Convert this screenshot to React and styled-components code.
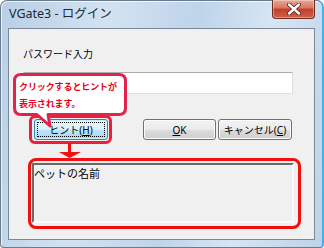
import React from 'react';
import styled, { createGlobalStyle } from 'styled-components';

const Global = createGlobalStyle`
  html, body { margin: 0; padding: 0; background: #ffffff; }
  body { font-family: "Noto Sans", "Noto Sans CJK JP", sans-serif; }
`

const Window = styled.div`
  position: relative;
  box-sizing: border-box;
  width: 324px;
  height: 248px;
  padding: 0 7px 8px 7px;
  border: 1px solid #6a7b8c;
  border-right: 2px solid #3cb3ef;
  border-radius: 7px 7px 4px 4px;
  background: linear-gradient(100deg, #b9cfe6 0%, #d2e2f1 30%, #bfd4ea 55%, #d6e5f3 75%, #bed3e8 100%);
  box-shadow: inset 1px 1px 0 rgba(255,255,255,0.7);
`

const TitleBar = styled.div`
  display: flex;
  align-items: flex-start;
  height: 27px;
  margin-left: 1px;
`

const Title = styled.div`
  padding-top: 5px;
  font-size: 12.5px;
  line-height: 16px;
  color: #1e2a36;
`

const CloseButton = styled.div`
  display: flex;
  align-items: center;
  justify-content: center;
  box-sizing: border-box;
  width: 43px;
  height: 19px;
  margin: -1px 0 0 auto;
  border: 1px solid #6e2b22;
  border-top: none;
  border-radius: 0 0 4px 4px;
  background: linear-gradient(#e8a597 0%, #d8765f 45%, #c0402a 50%, #d0604a 100%);
  box-shadow: inset 0 0 0 1px rgba(255,255,255,0.35);
`

const Client = styled.div`
  position: relative;
  box-sizing: border-box;
  height: 212px;
  padding: 19px 0 0 14px;
  border: 1px solid #78889a;
  background: #f0f0f0;
  font-size: 10px;
  line-height: 12px;
  color: #000;
`

const Label = styled.div`
  height: 12px;
`

const PasswordInput = styled.div`
  box-sizing: border-box;
  width: 270px;
  height: 22px;
  margin-top: 12px;
  border: 1px solid #dbdfe6;
  border-top-color: #abadb3;
  background: #fff;
`

const ButtonRow = styled.div`
  display: flex;
  align-items: center;
  gap: 2px;
  width: 269px;
  margin-top: 21px;
`

const HintMark = styled.div`
  box-sizing: border-box;
  display: flex;
  margin-left: 6px;
  margin-right: auto;
  padding: 1px 1px 1px 2px;
  border: 3px solid #e8203c;
  border-radius: 6px;
`

const Button = styled.div`
  position: relative;
  box-sizing: border-box;
  display: flex;
  align-items: center;
  justify-content: center;
  width: ${p => p.$w || 73}px;
  height: 21px;
  border: 1px solid ${p => (p.$focus ? '#3c7fb1' : '#707070')};
  border-radius: 3px;
  background: ${p =>
    p.$focus
      ? 'linear-gradient(#eaf6fd 0%, #d9f0fc 50%, #bee6fd 50%, #a7d9f5 100%)'
      : 'linear-gradient(#f2f2f2 0%, #ebebeb 50%, #dddddd 50%, #cfcfcf 100%)'};
  box-shadow: inset 0 0 0 1px ${p => (p.$focus ? '#cdeeff' : '#fcfcfc')};
  font-size: 10px;
  color: #000;

  ${p => p.$focus && `
    &::after {
      content: '';
      position: absolute;
      inset: 2px;
      border: 1px dotted #000;
    }
  `}

  u { text-decoration-thickness: 1px; text-underline-offset: 1px; }
`

const HintBoxMark = styled.div`
  box-sizing: border-box;
  width: 273px;
  height: 71px;
  margin: 14px 0 0 5px;
  padding: 2px 0 0 1px;
  border: 3px solid #f01010;
  border-radius: 8px;
`

const HintBox = styled.div`
  box-sizing: border-box;
  width: 262px;
  height: 60px;
  padding: 2px 0;
  border: 2px solid;
  border-color: #6a6a6a #fafafa #fafafa #6a6a6a;
  background: #f0f0f0;
  font-size: 11px;
  line-height: 13px;
`

const Callout = styled.div`
  position: absolute;
  left: 4px;
  top: 44px;
  width: 115px;
  height: 56px;
`

const CalloutText = styled.div`
  position: absolute;
  left: 6px;
  top: 5px;
  font-size: 9px;
  font-weight: 700;
  line-height: 17px;
  letter-spacing: -0.1px;
  color: #e8001a;
  white-space: nowrap;
`

const Arrow = styled.svg`
  position: absolute;
  left: 49px;
  top: 114px;
`

export default function App() {
  return (
    <>
      <Global />
      <Window>
        <TitleBar>
          <Title>VGate3 - ログイン</Title>
          <CloseButton>
            <svg width="16" height="12" viewBox="0 0 16 12">
              <path d="M3 1.5 L13 10.5 M13 1.5 L3 10.5" stroke="#5a1d14" strokeWidth="4" strokeLinecap="round" />
              <path d="M3 1.5 L13 10.5 M13 1.5 L3 10.5" stroke="#ffffff" strokeWidth="2.4" strokeLinecap="round" />
            </svg>
          </CloseButton>
        </TitleBar>
        <Client>
          <Label>パスワード入力</Label>
          <PasswordInput />
          <ButtonRow>
            <HintMark>
              <Button $focus $w={74}>ヒント(<u>H</u>)</Button>
            </HintMark>
            <Button><u>O</u>K</Button>
            <Button $w={74}>キャンセル(<u>C</u>)</Button>
          </ButtonRow>
          <HintBoxMark>
            <HintBox>ペットの名前</HintBox>
          </HintBoxMark>

          <Callout>
            <svg width="115" height="56" viewBox="0 0 115 56">
              <path
                d="M8 1.5 H106 Q112.5 1.5 112.5 8 V35 Q112.5 41.5 106 41.5 H35 L37 53 L24 41.5 H8 Q1.5 41.5 1.5 35 V8 Q1.5 1.5 8 1.5 Z"
                fill="#ffffff"
                stroke="#e0244e"
                strokeWidth="3"
                strokeLinejoin="round"
              />
            </svg>
            <CalloutText>
              クリックするとヒントが<br />
              表示されます。
            </CalloutText>
          </Callout>

          <Arrow width="26" height="16" viewBox="0 0 26 16">
            <rect x="10" y="0" width="3" height="10" fill="#f01010" />
            <path d="M1 9 H23 L11.5 15 Z" fill="#f01010" />
          </Arrow>
        </Client>
      </Window>
    </>
  );
}
